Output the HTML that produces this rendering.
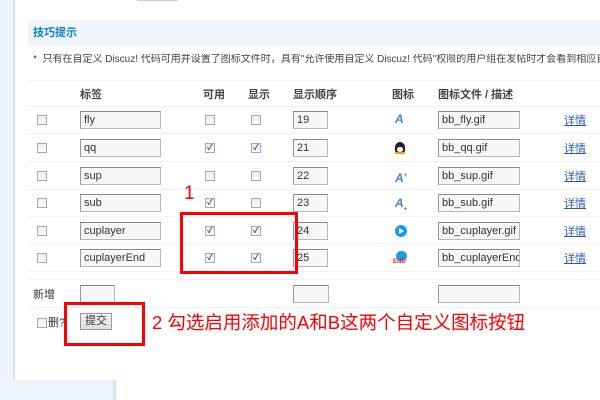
<!DOCTYPE html>
<html><head><meta charset="utf-8"><style>
*{margin:0;padding:0;box-sizing:border-box}
body{width:600px;height:400px;position:relative;overflow:hidden;background:#fff;font-family:"Liberation Sans","Noto Sans CJK SC",sans-serif;font-size:12px;color:#333}
.a{position:absolute}
.cb{position:absolute;width:10px;height:10px;border:1px solid #a8a8a8;background:linear-gradient(#eee,#fcfcfc)}
.ck::after{content:"✓";position:absolute;left:1px;top:-2px;font-size:8px;color:#3a4a9a;font-weight:bold}
.in{position:absolute;height:18px;border:1px solid #b8b8b8;border-top-color:#888;border-left-color:#999;background:#f7f7f7;font-size:11px;padding-left:3px;line-height:17px;color:#333;overflow:hidden;white-space:nowrap}
.hl{position:absolute;left:28px;width:572px;height:1px;background:#eef2f6}
.lnk{position:absolute;left:564px;color:#2a5db0;text-decoration:underline;font-size:11px;line-height:12px}
.th{position:absolute;top:89px;font-size:11px;color:#444;font-weight:bold;line-height:12px}
.red{position:absolute;border:3px solid #f00}
</style></head><body>
<div class="a" style="left:0;top:0;width:13px;height:380px;background:#edf3fa"></div>
<div class="a" style="left:13px;top:0;width:2px;height:380px;background:#d3e3f2"></div>
<div class="a" style="left:0;top:380px;width:113px;height:20px;background:#eef4fb"></div>
<div class="a" style="left:113px;top:380px;width:3px;height:20px;background:#d8e6f4"></div>
<div class="a" style="left:137px;top:0;width:41px;height:1px;background:#ccc"></div>
<div class="a" style="left:28px;top:20px;width:572px;height:26px;background:#eef5fb"></div>
<div class="a" style="left:33px;top:27px;font-size:11px;font-weight:bold;color:#0d84c8;line-height:12px">技巧提示</div>
<div class="a" style="left:33px;top:54px;width:567px;overflow:hidden;font-size:10px;line-height:12px;color:#444;white-space:nowrap">*&nbsp; 只有在自定义 Discuz! 代码可用并设置了图标文件时，具有"允许使用自定义 Discuz! 代码"权限的用户组在发帖时才会看到相应自定义</div>
<div class="hl" style="top:80px"></div>
<div class="th" style="left:80px">标签</div>
<div class="th" style="left:203px">可用</div>
<div class="th" style="left:248px">显示</div>
<div class="th" style="left:293px">显示顺序</div>
<div class="th" style="left:392px">图标</div>
<div class="th" style="left:438px">图标文件 / 描述</div>
<div class="hl" style="top:106px"></div>

<div class="cb" style="left:37px;top:115px"></div><div class="in" style="left:80px;top:111px;width:81px">fly</div><div class="cb" style="left:205px;top:115px"></div><div class="cb" style="left:251px;top:115px"></div><div class="in" style="left:293px;top:111px;width:35px">19</div><div class="a" style="left:395px;top:113px;color:#4a7fd4;font-weight:bold;font-style:italic;font-size:12px;line-height:12px">A</div><div class="in" style="left:438px;top:111px;width:82px">bb_fly.gif</div><div class="lnk" style="top:115px">详情</div>
<div class="hl" style="top:133px"></div>
<div class="cb" style="left:37px;top:143px"></div><div class="in" style="left:80px;top:139px;width:81px">qq</div><div class="cb ck" style="left:205px;top:143px"></div><div class="cb ck" style="left:251px;top:143px"></div><div class="in" style="left:293px;top:139px;width:35px">21</div><div class="a" style="left:395px;top:142px;width:10px;height:12px;border-radius:5px 5px 4px 4px;background:#222"><div class="a" style="left:2px;top:5px;width:6px;height:5px;background:#fff;border-radius:3px"></div><div class="a" style="left:0;top:10px;width:10px;height:2px;background:#f0a000"></div></div><div class="in" style="left:438px;top:139px;width:82px">bb_qq.gif</div><div class="lnk" style="top:143px">详情</div>
<div class="hl" style="top:161px"></div>
<div class="cb" style="left:37px;top:171px"></div><div class="in" style="left:80px;top:167px;width:81px">sup</div><div class="cb" style="left:205px;top:171px"></div><div class="cb" style="left:251px;top:171px"></div><div class="in" style="left:293px;top:167px;width:35px">22</div><div class="a" style="left:395px;top:170px;color:#4a7fd4;font-weight:bold;font-style:italic;font-size:12px;line-height:12px">A<sup style="font-size:6px">+</sup></div><div class="in" style="left:438px;top:167px;width:82px">bb_sup.gif</div><div class="lnk" style="top:171px">详情</div>
<div class="hl" style="top:189px"></div>
<div class="cb" style="left:37px;top:198px"></div><div class="in" style="left:80px;top:194px;width:81px">sub</div><div class="cb ck" style="left:205px;top:198px"></div><div class="cb" style="left:251px;top:198px"></div><div class="in" style="left:293px;top:194px;width:35px">23</div><div class="a" style="left:395px;top:197px;color:#4a7fd4;font-weight:bold;font-style:italic;font-size:12px;line-height:12px">A<sub style="font-size:6px">+</sub></div><div class="in" style="left:438px;top:194px;width:82px">bb_sub.gif</div><div class="lnk" style="top:198px">详情</div>
<div class="hl" style="top:216px"></div>
<div class="cb" style="left:37px;top:226px"></div><div class="in" style="left:80px;top:222px;width:81px">cuplayer</div><div class="cb ck" style="left:205px;top:226px"></div><div class="cb ck" style="left:251px;top:226px"></div><div class="in" style="left:293px;top:222px;width:35px">24</div><div class="a" style="left:395px;top:225px;width:12px;height:12px;border-radius:6px;background:#1a9be6"><div class="a" style="left:4px;top:3px;border-left:5px solid #fff;border-top:3px solid transparent;border-bottom:3px solid transparent"></div></div><div class="in" style="left:438px;top:222px;width:82px">bb_cuplayer.gif</div><div class="lnk" style="top:226px">详情</div>
<div class="hl" style="top:243px"></div>
<div class="cb" style="left:37px;top:253px"></div><div class="in" style="left:80px;top:249px;width:81px">cuplayerEnd</div><div class="cb ck" style="left:205px;top:253px"></div><div class="cb ck" style="left:251px;top:253px"></div><div class="in" style="left:293px;top:249px;width:35px">25</div><div class="a" style="left:396px;top:251px;width:11px;height:10px;border-radius:5px;background:#1a9be6"></div><div class="a" style="left:393px;top:259px;font-size:6px;line-height:6px;font-weight:bold;color:#e62020">END</div><div class="in" style="left:438px;top:249px;width:82px">bb_cuplayerEnd</div><div class="lnk" style="top:253px">详情</div>
<div class="hl" style="top:271px"></div>
<div class="hl" style="top:279px"></div>

<div class="a" style="left:33px;top:289px;font-size:11px;line-height:12px">新增</div>
<div class="in" style="left:80px;top:285px;width:35px"></div>
<div class="in" style="left:293px;top:285px;width:36px"></div>
<div class="in" style="left:438px;top:285px;width:82px"></div>
<div class="hl" style="top:307px"></div>
<div class="cb" style="left:37px;top:318px"></div>
<div class="a" style="left:48px;top:317px;font-size:11px;line-height:12px">删?</div>
<div class="a" style="left:80px;top:313px;width:32px;height:17px;border:1px solid #999;background:linear-gradient(#f4f4f4,#ddd);font-size:11px;text-align:center;line-height:15px">提交</div>

<div class="red" style="left:180px;top:212px;width:118px;height:62px"></div>
<div class="a" style="left:184px;top:183px;color:#f00;font-size:19px;line-height:22px">1</div>
<div class="red" style="left:64px;top:302px;width:81px;height:44px"></div>
<div class="a" style="left:152px;top:312px;color:#f00;font-size:18.5px;line-height:22px;white-space:nowrap">2 勾选启用添加的A和B这两个自定义图标按钮</div>
</body></html>
